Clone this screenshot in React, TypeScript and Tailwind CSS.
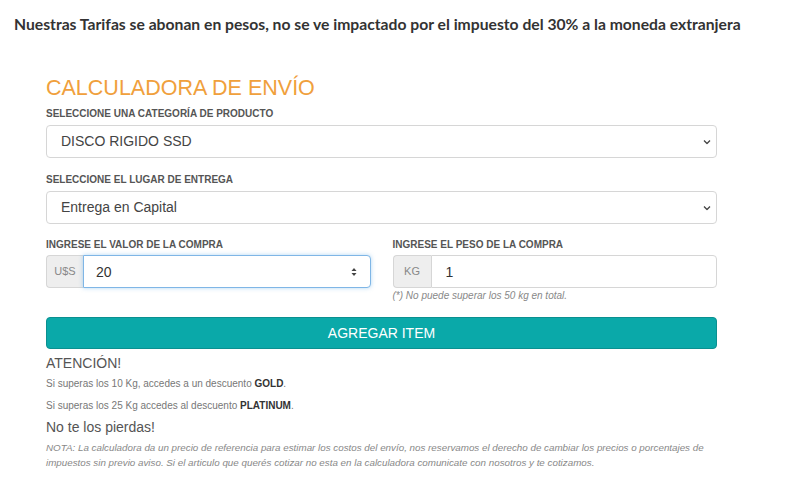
import React, { useState } from 'react';

const Chevron = () => (
  <svg width="8" height="5" viewBox="0 0 8 5" className="absolute right-[6px] top-1/2 -translate-y-1/2 pointer-events-none">
    <path d="M1 1l3 3 3-3" fill="none" stroke="#444" strokeWidth="1.3" />
  </svg>
);

const Spinner = () => (
  <svg width="6" height="10" viewBox="0 0 6 10" className="absolute right-[14px] top-1/2 -translate-y-1/2 pointer-events-none">
    <path d="M0.5 4L3 1l2.5 3z" fill="#444" />
    <path d="M0.5 6L3 9l2.5-3z" fill="#444" />
  </svg>
);

const App: React.FC = () => {
  const [category, setCategory] = useState('ssd');
  const [place, setPlace] = useState('capital');
  const [value, setValue] = useState('20');
  const [weight, setWeight] = useState('1');

  const label = "block text-[10px] font-bold uppercase text-[#555] leading-[12px]";
  const control = "w-full h-[33px] appearance-none rounded-[4px] border border-[#d6d6d6] bg-white pl-[14px] text-[14px] text-[#444] outline-none";

  return (
    <div className="w-[800px] h-[484px] bg-white overflow-hidden" style={{ fontFamily: '"Liberation Sans", Arial, sans-serif' }}>
      <h1 className="pl-[14px] pt-[14px] text-[15.7px] leading-[20px] font-bold text-[#333]" style={{ fontFamily: 'Lato, "Open Sans", sans-serif' }}>
        Nuestras Tarifas se abonan en pesos, no se ve impactado por el impuesto del 30% a la moneda extranjera
      </h1>

      <div className="ml-[46px] w-[671px]">
        <h2 className="mt-[42px] text-[21.5px] leading-[25px] text-[#f0a03c]">CALCULADORA DE ENVÍO</h2>

        <label className={`${label} mt-[7px]`}>Seleccione una categoría de producto</label>
        <div className="relative mt-[5px]">
          <select value={category} onChange={e => setCategory(e.target.value)} className={control}>
            <option value="ssd">DISCO RIGIDO SSD</option>
            <option value="hdd">DISCO RIGIDO HDD</option>
          </select>
          <Chevron />
        </div>

        <label className={`${label} mt-[16px]`}>Seleccione el lugar de entrega</label>
        <div className="relative mt-[5px]">
          <select value={place} onChange={e => setPlace(e.target.value)} className={control}>
            <option value="capital">Entrega en Capital</option>
            <option value="interior">Entrega en Interior</option>
          </select>
          <Chevron />
        </div>

        <div className="grid grid-cols-2 gap-x-[22px] mt-[15px]">
          <div>
            <label className={label}>Ingrese el valor de la compra</label>
            <div className="flex mt-[4px] h-[33px]">
              <span className="w-[37px] flex items-center justify-center bg-[#eeeeee] border border-[#d6d6d6] border-r-0 rounded-l-[4px] text-[11px] text-[#888]">U$S</span>
              <div className="relative flex-1">
                <input value={value} onChange={e => setValue(e.target.value)} className="w-full h-full rounded-r-[4px] border border-[#7fb6e6] shadow-[0_0_4px_rgba(102,175,233,0.5)] bg-white pl-[12px] text-[14px] text-[#333] outline-none" />
                <Spinner />
              </div>
            </div>
          </div>
          <div>
            <label className={label}>Ingrese el peso de la compra</label>
            <div className="flex mt-[4px] h-[33px]">
              <span className="w-[38px] flex items-center justify-center bg-[#eeeeee] border border-[#d6d6d6] border-r-0 rounded-l-[4px] text-[11px] text-[#888]">KG</span>
              <input value={weight} onChange={e => setWeight(e.target.value)} className="flex-1 h-full rounded-r-[4px] border border-[#d6d6d6] bg-white pl-[14px] text-[14px] text-[#333] outline-none" />
            </div>
            <p className="mt-[1px] text-[10px] leading-[14px] italic text-[#888]">(*) No puede superar los 50 kg en total.</p>
          </div>
        </div>

        <button className="mt-[14px] w-full h-[32px] rounded-[4px] bg-[#0aa9a9] border border-[#0a9090] text-white text-[14px]">AGREGAR ITEM</button>

        <h3 className="mt-[4px] text-[14px] leading-[20px] text-[#555]">ATENCIÓN!</h3>
        <p className="mt-[4px] text-[10px] leading-[14px] text-[#777]">Si superas los 10 Kg, accedes a un descuento <b className="text-[#333]">GOLD</b>.</p>
        <p className="mt-[8px] text-[10px] leading-[14px] text-[#777]">Si superas los 25 Kg accedes al descuento <b className="text-[#333]">PLATINUM</b>.</p>
        <h3 className="mt-[4px] text-[14px] leading-[20px] text-[#555]">No te los pierdas!</h3>
        <p className="mt-[3px] text-[9.8px] leading-[15px] italic text-[#888]">
          NOTA: La calculadora da un precio de referencia para estimar los costos del envío, nos reservamos el derecho de cambiar los precios o porcentajes de impuestos sin previo aviso. Si el articulo que querés cotizar no esta en la calculadora comunicate con nosotros y te cotizamos.
        </p>
      </div>
    </div>
  );
};

export default App;
